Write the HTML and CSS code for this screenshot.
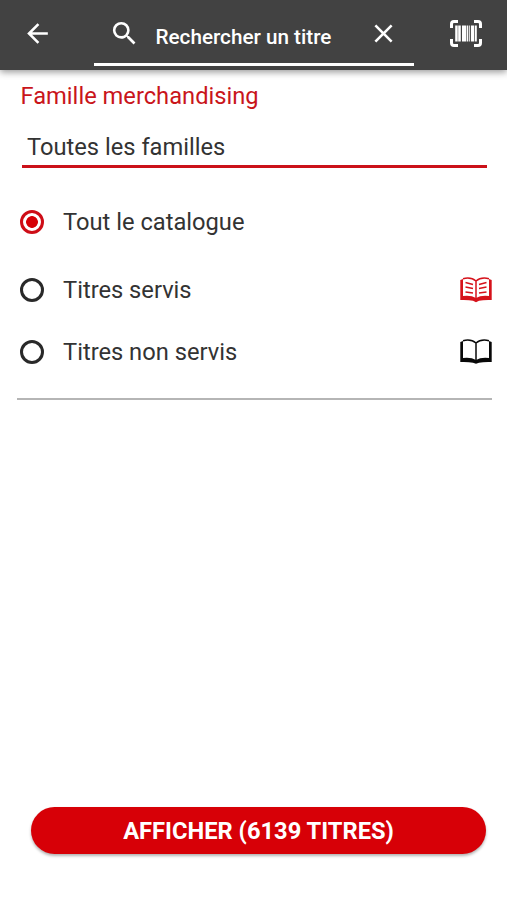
FILE: index.html
```
<!DOCTYPE html>
<html lang="fr">
<head>
<meta charset="utf-8">
<title>Catalogue</title>
<link rel="stylesheet" href="styles.css">
</head>
<body>
<header class="bar">
  <svg class="icon back" viewBox="0 0 24 24"><path d="M20 11H7.83l5.59-5.59L12 4l-8 8 8 8 1.41-1.41L7.83 13H20v-2z"/></svg>
  <div class="search">
    <svg class="icon" viewBox="0 0 24 24"><path d="M15.5 14h-.79l-.28-.27A6.47 6.47 0 0 0 16 9.5 6.5 6.5 0 1 0 9.5 16c1.61 0 3.09-.59 4.23-1.57l.27.28v.79l5 4.99L20.49 19l-4.99-5zm-6 0a4.5 4.5 0 1 1 0-9 4.5 4.5 0 0 1 0 9z"/></svg>
    <span class="query">Rechercher un titre</span>
    <svg class="icon" viewBox="0 0 24 24"><path d="M19 6.41 17.59 5 12 10.59 6.41 5 5 6.41 10.59 12 5 17.59 6.41 19 12 13.41 17.59 19 19 17.59 13.41 12z"/></svg>
  </div>
  <svg class="scan" viewBox="0 0 32 27"><path class="corners" d="M1.500 8V4Q1.500 1.500 4 1.500H8M24 1.500h4q2.500 0 2.500 2.500v4M30.500 19v4q0 2.500-2.500 2.500h-4M8 25.500H4Q1.500 25.500 1.500 23v-4"/><path d="M5.200 5.500h2.500v16H5.200zM8.200 5.500h2.600v16H8.200zM12 5.500h4.300v16H12zM16.900 5.500h1.400v16h-1.400zM19 5.500h.8v16H19zM20.900 5.500h3.200v16h-3.200zM24.800 5.500h2v16h-2z"/></svg>
</header>
<main>
  <h1>Famille merchandising</h1>
  <div class="select"><span>Toutes les familles</span></div>
  <div class="options">
    <label class="option first"><i class="radio on"></i><span>Tout le catalogue</span></label>
    <label class="option"><i class="radio"></i><span>Titres servis</span>
      <svg class="book red" viewBox="0 0 32 26"><path d="M.3 3 3 2v17q8-1 13 2 5-3 13-2V2l2.700 1v20q-8-.3-12.700.7l-3 1.500-3-1.500q-4.700-1-12.700-.7z"/><path class="page" d="M3 1.700Q11-.3 16 4q5-4.300 13-2.300M16 4v18"/><path class="lines" d="m5.500 5.500 7.500 2M5.500 10l7.500 1.500M5.500 15l7.500 1M26.500 5.500l-7.500 2M26.500 10 19 11.500M26.500 15l-7.500 1"/></svg>
    </label>
    <label class="option"><i class="radio"></i><span>Titres non servis</span>
      <svg class="book" viewBox="0 0 32 26"><path d="M.3 3 3 2v17q8-1 13 2 5-3 13-2V2l2.700 1v20q-8-.3-12.700.7l-3 1-3-1q-4.700-1-12.700-.7z"/><path class="page" d="M3 1.700Q11-.3 16 4q5-4.300 13-2.300M16 4v18"/></svg>
    </label>
  </div>
</main>
<button class="show"><span>AFFICHER (6139 TITRES)</span></button>
</body>
</html>
```
FILE: styles.css
```
* { box-sizing: border-box; }
body {
  margin: 0;
  height: 900px;
  display: flex;
  flex-direction: column;
  background: #fff;
  color: #333;
  font: 23.700px/30px Roboto, sans-serif;
  overflow: hidden;
}
.bar {
  height: 69.500px;
  flex: none;
  display: flex;
  background: #424242;
  color: #fff;
  box-shadow: 0 2px 7px rgba(0, 0, 0, .42);
}
svg { fill: currentColor; flex: none; }
.icon { width: 31px; height: 31px; margin-top: 18px; }
.back { margin-left: 21.500px; }
.search {
  width: 320px;
  height: 66px;
  margin-left: 41.500px;
  padding: 0 15px;
  display: flex;
  border-bottom: 3px solid #fff;
}
.query {
  flex: 1;
  margin: 22px 0 0 15.500px;
  font-size: 20.700px;
  font-weight: 500;
  white-space: nowrap;
}
.scan { width: 32px; height: 27px; margin: 20px 0 0 36px; }
.corners { fill: none; stroke: currentColor; stroke-width: 3; }
main { flex: 1; }
h1 {
  margin: 11.500px 0 0 20.500px;
  font-size: 23.700px;
  font-weight: 400;
  line-height: 30px;
  color: #c9151b;
}
.select {
  height: 47px;
  margin: 9.500px 20px 0 22px;
  padding: 11.500px 5px 0;
  border-bottom: 3px solid #cb1119;
}
.options {
  height: 232px;
  margin: 0 15px 0 17px;
  padding: 23px 0 0 3px;
  border-bottom: 2px solid #b5b5b5;
}
.option { display: flex; align-items: center; height: 62px; }
.first { margin-bottom: 6px; }
.radio {
  width: 24px;
  height: 24px;
  margin-right: 19px;
  border: 3px solid #292929;
  border-radius: 50%;
}
.radio.on {
  border-color: #ce0d17;
  background: radial-gradient(circle, #d60007 5.500px, transparent 6.200px);
}
.book { width: 32px; height: 26px; margin-left: auto; color: #080808; }
.red { color: #d6121b; }
.page, .lines { fill: none; stroke: currentColor; stroke-width: 1.500; }
.show {
  width: 455px;
  height: 47px;
  flex: none;
  margin: 0 0 46px 31px;
  padding: 1px 0 0;
  border: 0;
  border-radius: 24px;
  background: #d70007;
  color: #fff;
  box-shadow: 0 2px 3px rgba(0, 0, 0, .3);
  font: 700 23.700px/46px Roboto, sans-serif;
}
```
